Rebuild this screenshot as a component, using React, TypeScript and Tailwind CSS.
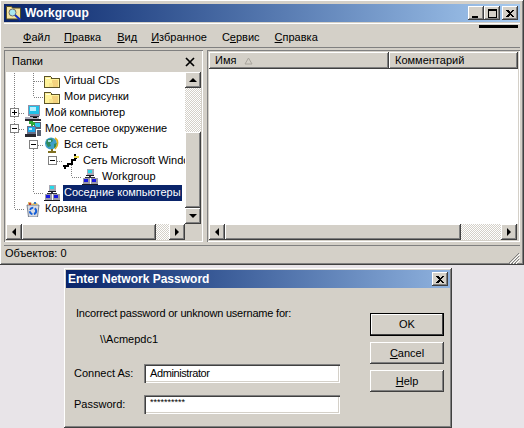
import type { ReactNode } from "react";

const raised =
  "bg-[#d4d0c8] shadow-[inset_-1px_-1px_0_#404040,inset_1px_1px_0_#fff,inset_-2px_-2px_0_#808080,inset_2px_2px_0_#d4d0c8]";
const sunken =
  "shadow-[inset_1px_1px_0_#808080,inset_2px_2px_0_#404040,inset_-1px_-1px_0_#fff,inset_-2px_-2px_0_#d4d0c8]";
const groove = "shadow-[inset_1px_1px_0_#808080,inset_-1px_-1px_0_#fff]";
const checker =
  "bg-[repeating-conic-gradient(#ffffff_0_25%,#d4d0c8_0_50%)] bg-[length:2px_2px]";

function Folder() {
  return (
    <svg width="16" height="16" viewBox="0 0 16 16" shapeRendering="crispEdges">
      <path d="M.500 3.500h6l1 1.500h7.500v9.500H.500z" fill="#fff39a" stroke="#5c5428" />
      <path d="M8 7h6v7H8z" fill="#f3d27e" />
      <path d="M5 10h4v4H5z" fill="#f9e48e" />
      <path d="M2 5h4v1H2z" fill="#fffde0" />
    </svg>
  );
}

function Computer() {
  return (
    <svg width="16" height="16" viewBox="0 0 16 16" shapeRendering="crispEdges">
      <path d="M3 0h12v11H3z" fill="#8f90a8" />
      <path d="M4 1h10v8H4z" fill="#20c0e8" />
      <path d="M5 2h6v4H5z" fill="#b8f0ff" />
      <path d="M5 11h9v1H5z" fill="#303040" />
      <path d="M0 12h14v2H0z" fill="#b0b0bc" />
      <path d="M0 14h16v2H0z" fill="#282830" />
      <path d="M8 12h4v1H8z" fill="#000" />
    </svg>
  );
}

function NetPlaces() {
  return (
    <svg width="16" height="16" viewBox="0 0 16 16" shapeRendering="crispEdges">
      <path d="M9 1h7v7H9z" fill="#586070" />
      <path d="M10 2h5v4h-5z" fill="#30c8e8" />
      <path d="M2 5h9v8H2z" fill="#687088" />
      <path d="M3 6h7v5H3z" fill="#20a8e8" />
      <path d="M4 7h3v2H4z" fill="#b8f0ff" />
      <path d="M0 13h11v3H0z" fill="#282830" />
      <path d="M12 9h4v6h-4z" fill="#586070" />
      <path d="M4 0h4v1h2v3H8v1H6V3H4z" fill="#30a838" />
    </svg>
  );
}

function Globe() {
  return (
    <svg width="16" height="16" viewBox="0 0 16 16">
      <circle cx="7" cy="6.500" r="6" fill="#3e9fc8" />
      <path d="M3 2.500 8 1.500 9 4 6 6 7 9 4 10 2 6zM10 7l3-1-1 4-2 1z" fill="#2f8a5c" />
      <path d="M4 3h3v2H4z" fill="#a8dff0" />
      <path d="M11 1c3 2 4 7 0 11" fill="none" stroke="#d8b020" strokeWidth="1.600" />
      <path d="M4 14h8v2H4zM7 12h2v2H7z" fill="#807020" />
    </svg>
  );
}

function NetLine() {
  return (
    <svg width="16" height="16" viewBox="0 0 16 16" shapeRendering="crispEdges">
      <path d="M0 12h4v-2h4V6h3V1h2v7h-3v4H6v2H3v2H1v-2H0z" fill="#000" />
      <path d="M11 3h5v2h-5z" fill="#e8d848" />
      <path d="M11 5h3v1h-3z" fill="#000" />
    </svg>
  );
}

function Pc({ x, y }: { x: number; y: number }) {
  return (
    <g transform={`translate(${x} ${y})`}>
      <path d="M0 0h7v6H0z" fill="#9898a8" />
      <path d="M1.500 1h4v3h-4z" fill="#1818e0" />
      <path d="M-.500 6h8v1h-8z" fill="#181820" />
    </g>
  );
}

function Workgroup() {
  return (
    <svg width="16" height="16" viewBox="0 0 16 16" shapeRendering="crispEdges">
      <path d="M7 7h2v2H7zM3 8h10v1H3z" fill="#303040" />
      <g transform="translate(4.500 0)">
        <path d="M0 0h7v6H0z" fill="#a8a8b4" />
        <path d="M1.500 1h4v3h-4z" fill="#28d8e8" />
        <path d="M-.500 6h8v1h-8z" fill="#181820" />
      </g>
      <Pc x={0.5} y={9} />
      <Pc x={8.5} y={9} />
    </svg>
  );
}

function Recycle() {
  return (
    <svg width="16" height="16" viewBox="0 0 16 16">
      <path d="M2 4h12l-1.500 12h-9z" fill="#d8dce4" stroke="#606878" strokeWidth="0.800" />
      <path d="M3 1h3l1 2 3-2 3 2-1 1H3z" fill="#d8b868" />
      <path d="M4 2h2v2H4z" fill="#c83030" />
      <path d="M9 1h2v2H9z" fill="#3878c0" />
      <circle cx="8" cy="10" r="3.200" fill="none" stroke="#1860d8" strokeWidth="2" strokeDasharray="4 1.500" />
    </svg>
  );
}

function SearchFolder() {
  return (
    <svg width="16" height="16" viewBox="0 0 16 16" className="shrink-0">
      <path d="M.500 1.500h5l1 1.500h8v11h-14z" fill="#f4e3a0" stroke="#5a5020" />
      <circle cx="6.500" cy="7.500" r="3.500" fill="#a8e8f0" stroke="#707070" />
      <path d="m9 10 5.500 5" stroke="#1030c0" strokeWidth="2" />
    </svg>
  );
}

function Arrow({ dir }: { dir: "up" | "down" | "left" | "right" }) {
  const d = {
    up: "M0 4 4 0l4 4z",
    down: "M0 0h8L4 4z",
    left: "M4 0v8L0 4z",
    right: "M0 0l4 4-4 4z",
  }[dir];
  const vertical = dir === "up" || dir === "down";
  return (
    <svg width={vertical ? 8 : 4} height={vertical ? 4 : 8} viewBox={vertical ? "0 0 8 4" : "0 0 4 8"}>
      <path d={d} fill="#000" />
    </svg>
  );
}

function ScrollButton({ dir, className = "" }: { dir: "up" | "down" | "left" | "right"; className?: string }) {
  return (
    <div className={`${raised} flex shrink-0 items-center justify-center ${className}`}>
      <Arrow dir={dir} />
    </div>
  );
}

function CaptionButton({ children }: { children: ReactNode }) {
  return (
    <div className={`${raised} flex h-[14px] w-4 items-center justify-center`}>{children}</div>
  );
}

const closeGlyph = (
  <svg width="8" height="7" viewBox="0 0 8 7" shapeRendering="crispEdges">
    <path d="M0 0h2l2 2 2-2h2L5 3.500 8 7H6L4 5 2 7H0l3-3.500z" fill="#000" />
  </svg>
);

type TreeRow = {
  icon: ReactNode;
  label: string;
  left: number;
  box?: { x: number; open: boolean };
  selected?: boolean;
};

const rows: TreeRow[] = [
  { icon: <Folder />, label: "Virtual CDs", left: 38 },
  { icon: <Folder />, label: "Мои рисунки", left: 38 },
  { icon: <Computer />, label: "Мой компьютер", left: 19, box: { x: 4, open: false } },
  { icon: <NetPlaces />, label: "Мое сетевое окружение", left: 19, box: { x: 4, open: true } },
  { icon: <Globe />, label: "Вся сеть", left: 38, box: { x: 23, open: true } },
  { icon: <NetLine />, label: "Сеть Microsoft Windows", left: 57, box: { x: 42, open: true } },
  { icon: <Workgroup />, label: "Workgroup", left: 76 },
  { icon: <Workgroup />, label: "Соседние компьютеры", left: 38, selected: true },
  { icon: <Recycle />, label: "Корзина", left: 19 },
];

function Tree() {
  return (
    <div className="relative h-[152px] overflow-hidden bg-white pt-px">
      {/* dotted connectors */}
      <svg className="absolute left-0 top-px" width="182" height="152" shapeRendering="crispEdges">
        <path
          d="M8.500 0V136M8.500 40H19M8.500 56H19M8.500 136H19M27.500 0V24M27.500 8H38M27.500 24H38M27.500 72V120M27.500 72H38M27.500 120H38M46.500 88H57M65.500 92V104H76"
          fill="none"
          stroke="#808080"
          strokeDasharray="1 1"
        />
      </svg>
      {rows.map((r) => (
        <div
          key={r.label}
          className="relative flex h-4 items-center whitespace-nowrap"
          style={{ paddingLeft: r.left }}
        >
          {r.box && (
            <div
              className="absolute top-[3px] flex h-[9px] w-[9px] items-center justify-center border border-[#808080] bg-white"
              style={{ left: r.box.x }}
            >
              <span className="absolute h-px w-[5px] bg-black" />
              {!r.box.open && <span className="absolute h-[5px] w-px bg-black" />}
            </div>
          )}
          <span className="relative mr-[3px] h-4 w-4 shrink-0">{r.icon}</span>
          <span
            className={
              r.selected
                ? "h-4 bg-[#0a246a] px-px leading-[15px] text-white"
                : "h-4 px-px leading-[15px] text-black"
            }
          >
            {r.label}
          </span>
        </div>
      ))}
    </div>
  );
}

function Explorer() {
  return (
    <div className={`${raised} h-[265px] p-1`}>
      <div className="flex h-[18px] items-center gap-[3px] bg-gradient-to-r from-[#0a246a] to-[#a6caf0] pl-[2px] pr-[2px]">
        <SearchFolder />
        <span className="flex-1 text-[12px] font-bold text-white">Workgroup</span>
        <div className="flex">
          <CaptionButton>
            <span className="mt-[7px] mr-[3px] h-[2px] w-[6px] bg-black" />
          </CaptionButton>
          <CaptionButton>
            <span className="h-[9px] w-[9px] border border-t-2 border-black" />
          </CaptionButton>
          <div className="ml-[2px]">
            <CaptionButton>{closeGlyph}</CaptionButton>
          </div>
        </div>
      </div>

      <div className="relative mt-[1px] flex h-[25px] items-center gap-[15px] border-t border-b border-t-white border-b-[#808080] pl-[19px] pt-[3px] text-black">
        <span><u>Ф</u>айл</span>
        <span className="ml-[-1px]"><u>П</u>равка</span>
        <span className="ml-[1px]"><u>В</u>ид</span>
        <span className="ml-[-1px]"><u>И</u>збранное</span>
        <span>С<u>е</u>рвис</span>
        <span><u>С</u>правка</span>
        <div className="absolute right-[2px] top-[1px] h-[3px] w-[39px] bg-black" />
      </div>

      <div className="mt-[2px] flex h-[192px] gap-1">
        <div className={`${groove} flex w-[199px] flex-col p-[2px] pt-px`}>
          <div className="flex h-[21px] shrink-0 items-center justify-between pl-[6px] pr-[3px]">
            <span>Папки</span>
            <svg width="16" height="16" viewBox="0 0 16 16">
              <path d="m4 4 8 8m0-8-8 8" stroke="#000" strokeWidth="1.700" />
            </svg>
          </div>
          <div className="flex min-h-0 flex-1 flex-col">
            <div className="flex">
              <div className="min-w-0 flex-1"><Tree /></div>
              <div className="flex h-[152px] w-4 shrink-0 flex-col">
                <ScrollButton dir="up" className="h-4" />
                <div className={`${checker} h-[44px]`} />
                <div className={`${raised} flex-1`} />
                <ScrollButton dir="down" className="h-4" />
              </div>
            </div>
            <div className="flex h-4">
              <ScrollButton dir="left" className="w-4" />
              <div className={`${raised} w-[134px]`} />
              <div className={`${checker} w-[13px]`} />
              <ScrollButton dir="right" className="w-4" />
              <div className="flex-1 bg-[#d4d0c8]" />
            </div>
          </div>
        </div>

        <div className={`${groove} flex flex-1 flex-col p-[2px]`}>
          <div className="flex h-[17px] shrink-0">
            <div className={`${raised} flex w-[180px] items-center gap-2 pl-[6px]`}>
              <span>Имя</span>
              <svg width="9" height="8" viewBox="0 0 9 8">
                <path d="M4.500 1 8 7H1z" fill="none" stroke="#a8a49c" />
              </svg>
            </div>
            <div className={`${raised} flex flex-1 items-center pl-[6px]`}>Комментарий</div>
          </div>
          <div className="flex-1 bg-white" />
          <div className="flex h-4 shrink-0 pr-px">
            <ScrollButton dir="left" className="w-4" />
            <div className={`${raised} flex-1`} />
            <div className={`${checker} w-[40px]`} />
            <ScrollButton dir="right" className="w-4" />
          </div>
        </div>
      </div>

      <div className="relative mt-[3px] flex h-[19px] items-center border-t border-t-[#808080] pb-[3px] pl-px">
        <span>Объектов: 0</span>
        <svg className="absolute right-0 bottom-0" width="12" height="12" viewBox="0 0 12 12">
          <path d="M11 1 1 11M11 4 4 11M11 7 7 11" stroke="#808080" />
          <path d="M12 2 2 12M12 5 5 12M12 8 8 12" stroke="#fff" />
        </svg>
      </div>
    </div>
  );
}

function DialogButton({ children, primary }: { children: ReactNode; primary?: boolean }) {
  return (
    <div
      className={
        primary
          ? "flex h-[23px] w-[74px] items-center justify-center border border-black bg-[#d4d0c8] shadow-[inset_-1px_-1px_0_#404040,inset_1px_1px_0_#fff]"
          : `${raised} flex h-[22px] w-[74px] items-center justify-center`
      }
    >
      {children}
    </div>
  );
}

function Field({ label, value, small }: { label: string; value: string; small?: boolean }) {
  return (
    <div className="flex items-center">
      <span className="w-[70px] shrink-0">{label}</span>
      <div
        className={`${sunken} flex h-[19px] w-[196px] bg-white pl-[6px] ${
          small ? "items-start pt-[3px] text-[9px] leading-[9px]" : "items-center tracking-[-0.4px]"
        }`}
      >
        {value}
      </div>
    </div>
  );
}

function PasswordDialog() {
  return (
    <div className={`${raised} ml-16 mt-[3px] h-[160px] w-[388px] p-[2px]`}>
      <div className="flex h-[18px] items-center justify-between bg-gradient-to-r from-[#0a246a] to-[#8fb2de] pl-[2px] pr-[2px]">
        <span className="text-[12px] font-bold text-white">Enter Network Password</span>
        <CaptionButton>{closeGlyph}</CaptionButton>
      </div>
      <div className="flex justify-between pl-2 pr-[6px] pt-[18px]">
        <div>
          <p className="pl-[2px] leading-[14px] tracking-[-0.2px]">Incorrect password or unknown username for:</p>
          <p className="mt-[12px] pl-[26px] leading-[14px]">\\Acmepdc1</p>
          <div className="mt-[18px] flex flex-col gap-3">
            <Field label="Connect As:" value="Administrator" />
            <Field label="Password:" value="**********" small />
          </div>
        </div>
        <div className="flex flex-col gap-[6px] pt-[7px]">
          <DialogButton primary>OK</DialogButton>
          <DialogButton><span><u>C</u>ancel</span></DialogButton>
          <DialogButton><span><u>H</u>elp</span></DialogButton>
        </div>
      </div>
    </div>
  );
}

export default function App() {
  return (
    <div className="h-[428px] w-[524px] overflow-hidden bg-[#e8e4e8] font-['Liberation_Sans',Arial,sans-serif] text-[11px] text-black">
      <Explorer />
      <PasswordDialog />
    </div>
  );
}
